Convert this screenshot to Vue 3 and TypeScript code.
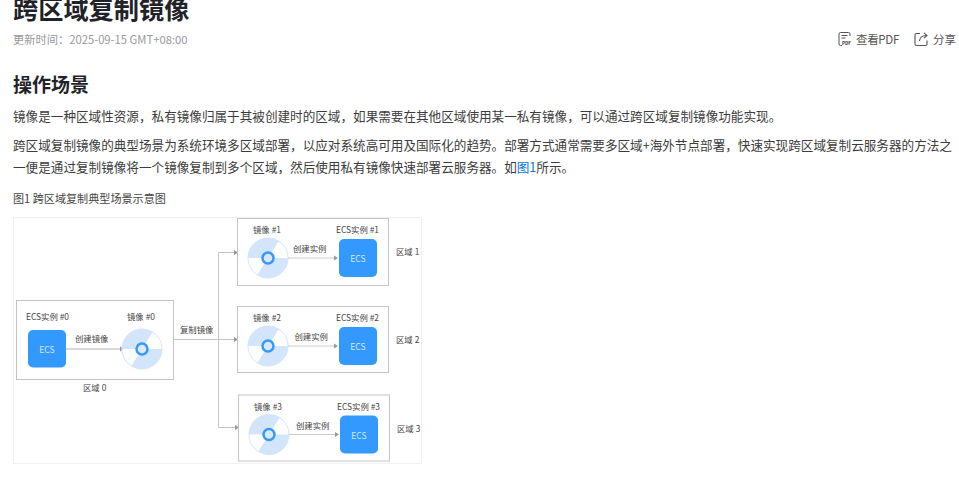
<script setup lang="ts">
interface Region {
  bx: number
  by: number
  bh: number
  lx: number
  n: number
}
const regions: Region[] = [
  { bx: 224, by: 1, bh: 67, lx: 56, n: 1 },
  { bx: 224, by: 89, bh: 66, lx: 57.5, n: 2 },
  { bx: 225, by: 177.5, bh: 66, lx: 58, n: 3 },
]
const discWedges = 'M0 0 L10.5 -16.5 A19.5 19.5 0 0 1 19.5 0 Z M0 0 L-19.5 0 A19.5 19.5 0 0 0 -10.5 16.5 Z'
</script>

<template>
  <main class="page">
    <h1 class="title">跨区域复制镜像</h1>
    <div class="meta">
      <span class="updated">更新时间：2025-09-15 GMT+08:00</span>
      <div class="actions">
        <a class="action pdf">
          <svg width="15" height="16" viewBox="0 0 15 16" fill="none" stroke="#555" stroke-width="1">
            <path d="M2 10V3a1.5 1.5 0 0 1 1.5-1.5h8A1.5 1.5 0 0 1 13 3v2M2 10v3a1.5 1.5 0 0 0 1.5 1.5H5" />
            <path d="M4.5 4.5h6M4.5 7h4" />
            <text x="5" y="13.6" class="pdf-mark">PDF</text>
          </svg>
          查看PDF
        </a>
        <a class="action">
          <svg width="16" height="16" viewBox="0 0 16 16" fill="none" stroke="#555" stroke-width="1.1">
            <path d="M7 2.5H3.5A1.5 1.5 0 0 0 2 4v9a1.5 1.5 0 0 0 1.5 1.5h9A1.5 1.5 0 0 0 14 13V9.5" />
            <path d="M6.5 10c.3-3.5 2.6-5.5 7-5.5M11 1.8l3 2.7-3 2.7" />
          </svg>
          分享
        </a>
      </div>
    </div>

    <h2 class="heading">操作场景</h2>
    <p class="para">镜像是一种区域性资源，私有镜像归属于其被创建时的区域，如果需要在其他区域使用某一私有镜像，可以通过跨区域复制镜像功能实现。</p>
    <p class="para">跨区域复制镜像的典型场景为系统环境多区域部署，以应对系统高可用及国际化的趋势。部署方式通常需要多区域+海外节点部署，快速实现跨区域复制云服务器的方法之一便是通过复制镜像将一个镜像复制到多个区域，然后使用私有镜像快速部署云服务器。如<a class="link">图1</a>所示。</p>
    <p class="caption">图1 跨区域复制典型场景示意图</p>

    <figure class="figure">
      <svg class="diagram" width="409" height="247" viewBox="0 0 409 247">
        <rect x="0.5" y="0.5" width="408" height="246" fill="#fff" stroke="#f1f1f1" />

        <!-- Region 0 -->
        <rect x="3.5" y="83.5" width="157" height="79" fill="#fff" stroke="#c4c4c4" stroke-width="1" />
        <text x="13" y="103" class="t">ECS实例 #0</text>
        <text x="114" y="103" class="t">镜像 #0</text>
        <rect x="15" y="113" width="38" height="37.5" rx="5" fill="#3399ff" />
        <text x="34" y="136" class="ecs">ECS</text>
        <text x="62" y="125" class="t">创建镜像</text>
        <path d="M53 132H107" stroke="#cccccc" stroke-width="1.5" />
        <path d="M107 129.5v5l4-2.5Z" fill="#999" />
        <g transform="translate(129 132)">
          <circle r="20" fill="#d3e5fb" stroke="#d3e5fb" stroke-width="1" />
          <path :d="discWedges" fill="#fff" />
          <circle r="5.5" fill="#dde9f8" stroke="#3399ff" stroke-width="2.5" />
        </g>
        <text x="70" y="174" class="t">区域 0</text>

        <!-- Connectors -->
        <path d="M160 122.5H224M205.5 35.5V210.5M205.5 35.5H224M205.5 210.5H225" fill="none" stroke="#c4c4c4" stroke-width="1" />
        <path d="M221 33v5l4-2.5ZM221 120v5l4-2.5ZM222 208v5l4-2.5Z" fill="#999" />
        <text x="167" y="116" class="t">复制镜像</text>

        <!-- Regions 1 to 3 -->
        <g v-for="r in regions" :key="r.n" :transform="`translate(${r.bx} ${r.by})`">
          <rect x="0.5" y="0.5" width="151" :height="r.bh" fill="#fff" stroke="#c4c4c4" stroke-width="1" />
          <text x="16" y="15" class="t">镜像 #{{ r.n }}</text>
          <text x="99" y="15" class="t">ECS实例 #{{ r.n }}</text>
          <text :x="r.lx" y="34" class="t">创建实例</text>
          <g transform="translate(31 40)">
            <circle r="20" fill="#d3e5fb" stroke="#d3e5fb" stroke-width="1" />
            <path :d="discWedges" fill="#fff" />
            <circle r="5.5" fill="#dde9f8" stroke="#3399ff" stroke-width="2.5" />
          </g>
          <path d="M51 40H98" stroke="#cccccc" stroke-width="1.2" />
          <path d="M97 37.5v5l4-2.5Z" fill="#999" />
          <rect x="102" y="21" width="38" height="38" rx="5" fill="#3399ff" />
          <text x="121" y="44" class="ecs">ECS</text>
          <text x="159" y="37" class="t">区域 {{ r.n }}</text>
        </g>
      </svg>
    </figure>
  </main>
</template>

<style scoped>
.page {
  width: 959px;
  height: 478px;
  overflow: hidden;
  box-sizing: border-box;
  padding: 0 0 0 13px;
  background: #fff;
  color: #252b3a;
  font-family: "Noto Sans CJK SC", "Noto Sans", sans-serif;
}
.title {
  margin: -10px 0 0;
  font-size: 25.2px;
  line-height: 36px;
  font-weight: 700;
  color: #1f2329;
}
.meta {
  display: flex;
  justify-content: space-between;
  align-items: center;
  margin-top: 1px;
  height: 24px;
  padding-right: 3px;
}
.updated {
  font-size: 11.25px;
  color: #999;
}
.actions {
  display: flex;
  gap: 14px;
}
.action {
  display: flex;
  align-items: center;
  gap: 4px;
  font-size: 11.5px;
  color: #555;
}
.pdf {
  letter-spacing: -0.3px;
}
.pdf-mark {
  font-size: 4.6px;
  font-weight: 700;
  fill: #333;
  stroke: none;
  letter-spacing: 0;
}
.heading {
  margin: 19px 0 0;
  font-size: 19px;
  line-height: 28px;
  font-weight: 700;
  color: #1f2329;
}
.para {
  margin: 7px 0 0;
  width: 941px;
  font-size: 12.6px;
  line-height: 22px;
  color: #3c3c3c;
}
.link {
  color: #0a7ad8;
}
.caption {
  margin: 11px 0 0;
  font-size: 11.1px;
  line-height: 18px;
  color: #444;
}
.figure {
  margin: 10px 0 0;
  width: 409px;
  height: 247px;
}
.diagram {
  display: block;
}
.t {
  font-size: 8.4px;
  fill: #444;
}
.ecs {
  font-size: 8.5px;
  fill: #d7e9ff;
  text-anchor: middle;
}
</style>
